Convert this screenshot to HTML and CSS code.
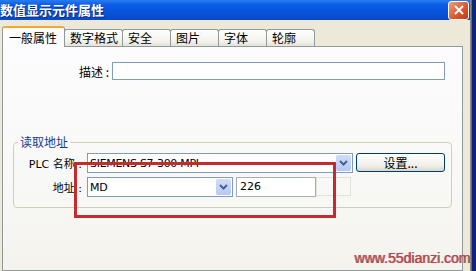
FILE: index.html
```html
<!DOCTYPE html>
<html lang="zh-CN">
<head>
  <meta charset="UTF-8">
  <title>数值显示元件属性</title>
  <link rel="stylesheet" href="styles.css">
</head>
<body>
  <div class="screen">
    <div class="window">
      <div class="titlebar">
        <span class="title">数值显示元件属性</span>
        <span class="close">
          <svg width="10" height="10" viewBox="0 0 10 10"><path d="M1 1L9 9M9 1L1 9" stroke="#fff" stroke-width="2"/></svg>
        </span>
      </div>
      <div class="client">
        <div class="tabs">
          <div class="tab active">一般属性</div>
          <div class="tab">数字格式</div>
          <div class="tab">安全</div>
          <div class="tab">图片</div>
          <div class="tab">字体</div>
          <div class="tab">轮廓</div>
        </div>
        <div class="panel">
          <div class="desc-row">
            <span class="lbl">描述 :</span>
            <div class="textbox desc"></div>
          </div>

          <fieldset class="group">
            <legend>读取地址</legend>
            <div class="form">
              <span class="lbl">PLC 名称 :</span>
              <div class="line">
                <div class="combo plc">
                  <span class="val">SIEMENS S7-300 MPI</span>
                  <span class="drop"><svg width="9" height="6" viewBox="0 0 9 6"><path d="M1 1L4.5 4.5L8 1" fill="none" stroke="#4d6185" stroke-width="2"/></svg></span>
                </div>
                <button class="btn">设置...</button>
              </div>
              <span class="lbl">地址 :</span>
              <div class="line">
                <div class="combo addr">
                  <span class="val">MD</span>
                  <span class="drop"><svg width="9" height="6" viewBox="0 0 9 6"><path d="M1 1L4.5 4.5L8 1" fill="none" stroke="#4d6185" stroke-width="2"/></svg></span>
                </div>
                <div class="textbox num">226</div>
                <div class="ghost"></div>
              </div>
            </div>
          </fieldset>
        </div>
      </div>
    </div>
    <div class="backwin"></div>

    <!-- annotation drawn over the screenshot -->
    <div class="mark"></div>
    <div class="wm">www.55dianzi.com</div>
  </div>
</body>
</html>
```

FILE: styles.css
```css
body {
  margin: 0;
  background: #ece9d8;
  font-family: "Noto Sans CJK SC", sans-serif;
  font-size: 12px;
  color: #000;
}

.screen {
  position: relative;
  display: flex;
  width: 476px;
  height: 271px;
  overflow: hidden;
}

.window {
  width: 470px;
  border-right: 1px solid #8a8a86;
  display: flex;
  flex-direction: column;
}

.titlebar {
  height: 20px;
  display: flex;
  align-items: center;
  justify-content: space-between;
  background: linear-gradient(#2a7cf0 0%, #0a5ce6 25%, #0654da 60%, #0a48c4 100%);
}

.title {
  color: #fff;
  font-weight: bold;
  font-size: 13px;
  line-height: 20px;
  text-shadow: 1px 1px 0 #0a2a80;
}

.close {
  width: 19px;
  height: 17px;
  margin-right: 1px;
  border: 1px solid #fff;
  border-radius: 3px;
  background: linear-gradient(135deg, #eba080, #dc5a30 55%, #bb3c1a);
  display: flex;
  align-items: center;
  justify-content: center;
}

.client {
  flex: 1;
  display: flex;
  flex-direction: column;
  padding: 6px 7px 0 2px;
  background: #ece9d8;
}

.tabs {
  display: flex;
  align-items: flex-end;
  height: 20px;
  position: relative;
  z-index: 1;
}

.tab {
  height: 16px;
  min-width: 38px;
  padding: 0 4px 0 5px;
  line-height: 16px;
  border: 1px solid #919b9c;
  border-bottom: none;
  border-radius: 3px 3px 0 0;
  background: linear-gradient(#fefefe, #f3f2ec 70%, #e4e2d8);
  margin-right: -1px;
}

.tab.active {
  height: 19px;
  margin-bottom: -1px;
  padding: 0 7px 0 6px;
  border-top: 2px solid #f5a82b;
  background: #fcfcfe;
  line-height: 19px;
  width: 48px;
  min-width: 0;
}

.panel {
  flex: 1;
  border: 1px solid #919b9c;
  background: linear-gradient(#fcfcfe, #f8f8f6 60%, #f4f3ee);
  padding-top: 15px;
}

.desc-row {
  display: flex;
  align-items: center;
  gap: 3px;
}

.desc-row .lbl {
  width: 106px;
  text-align: right;
}

.textbox {
  box-sizing: border-box;
  height: 18px;
  border: 1px solid #7f9db9;
  background: #fff;
}

.textbox.desc {
  width: 333px;
}

.group {
  margin: 54px 10px 0 10px;
  padding: 3px 0 10px 0;
  border: 1px solid #d0d0bf;
  border-radius: 4px;
}

.group legend {
  margin-left: 4px;
  padding: 0 2px;
  line-height: 16px;
  color: #1e3c8c;
  font-size: 12px;
}

.form {
  display: grid;
  grid-template-columns: 71px auto;
  column-gap: 2px;
  row-gap: 4px;
  align-items: center;
}

.form .lbl {
  text-align: right;
  padding-right: 3px;
  font-family: "DejaVu Sans", "Noto Sans CJK SC", sans-serif;
  font-size: 11px;
}

.line {
  display: flex;
  gap: 3px;
  height: 20px;
}

.combo {
  box-sizing: border-box;
  height: 20px;
  border: 1px solid #7f9db9;
  background: #fff;
  display: flex;
  align-items: center;
  justify-content: space-between;
  padding: 0 1px 0 2px;
}

.combo.plc {
  width: 266px;
}

.combo.addr {
  width: 146px;
}

.val {
  font-family: "DejaVu Sans", sans-serif;
  font-size: 11px;
  letter-spacing: -0.3px;
}

.drop {
  width: 15px;
  height: 16px;
  border-radius: 2px;
  background: linear-gradient(#cfdcfb, #b6c9f5);
  display: flex;
  align-items: center;
  justify-content: center;
}

.btn {
  box-sizing: border-box;
  width: 89px;
  height: 19px;
  border: 1px solid #003c74;
  border-radius: 3px;
  background: linear-gradient(#ffffff, #f0efe8 70%, #d8d5c8);
  font-family: "Noto Sans CJK SC", sans-serif;
  font-size: 12px;
  line-height: 15px;
  padding: 0;
}

.textbox.num {
  width: 80px;
  height: 20px;
  border-color: #a5acb2;
  padding-left: 3px;
  font-family: "DejaVu Sans", sans-serif;
  font-size: 11px;
  line-height: 18px;
  box-sizing: border-box;
}

.ghost {
  width: 35px;
  height: 19px;
  margin-left: -3px;
  border: 1px solid #e2e1da;
  box-sizing: border-box;
}

.backwin {
  flex: 1;
  background: #0c247a;
  border-left: 1px solid #6a6a70;
}

.mark {
  position: absolute;
  left: 74px;
  top: 162px;
  width: 256px;
  height: 50px;
  border: 3px solid #c42a2e;
}

.wm {
  position: absolute;
  right: 5px;
  bottom: 5px;
  font-family: "Liberation Sans", sans-serif;
  font-size: 14px;
  color: #d03a44;
  text-shadow: -1px 0 0 #888;
}
```
